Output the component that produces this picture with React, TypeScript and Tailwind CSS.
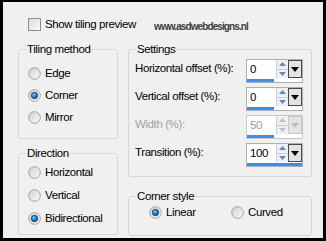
import React from "react";

const font = "font-['Liberation_Sans',Arial,sans-serif]";

function Radio({ checked }: { checked?: boolean }) {
  return (
    <svg width="13" height="13" viewBox="0 0 13 13" className="shrink-0">
      <defs>
        <linearGradient id="rg" x1="0" y1="0" x2="1" y2="1">
          <stop offset="0" stopColor="#cfcfcf" />
          <stop offset="1" stopColor="#fbfbfb" />
        </linearGradient>
        <radialGradient id="bg" cx="0.4" cy="0.35" r="0.7">
          <stop offset="0" stopColor="#6fc0f5" />
          <stop offset="0.6" stopColor="#1a78c8" />
          <stop offset="1" stopColor="#0b3f80" />
        </radialGradient>
      </defs>
      <circle cx="6.5" cy="6.5" r="5.8" fill="url(#rg)" stroke="#a3a3a3" strokeWidth="1" />
      {checked && <circle cx="6.5" cy="6.5" r="3.2" fill="url(#bg)" stroke="#163a66" strokeWidth="0.8" />}
    </svg>
  );
}

function RadioRow({ label, checked, className = "" }: { label: string; checked?: boolean; className?: string }) {
  return (
    <div className={`flex h-[13px] items-center gap-[4px] ${className}`}>
      <Radio checked={checked} />
      <span className="leading-none">{label}</span>
    </div>
  );
}

function Group({ title, className = "", children }: { title: string; className?: string; children: React.ReactNode }) {
  return (
    <div className={`relative rounded-[3px] border border-[#d3d8dc] ${className}`}>
      <span className="absolute left-[7px] top-[-8px] bg-[#f0f0f0] px-[1px] leading-[14px]">{title}</span>
      {children}
    </div>
  );
}

function Spin({ value, bar, disabled }: { value: string; bar: number; disabled?: boolean }) {
  return (
    <div className={`flex h-[24px] w-[57px] shrink-0 flex-col border ${disabled ? "border-[#c8c8c8]" : "border-[#a9afb6]"} bg-white`}>
      <div className="flex h-[18px]">
        <div className={`flex w-[30px] items-center pl-[3px] pt-[2px] leading-none ${disabled ? "text-[#9a9a9a]" : "text-black"}`}>{value}</div>
        <div className="flex w-[12px] flex-col border-l border-[#c9cfd6] bg-[#eef1f4]">
          <div className="flex flex-1 items-center justify-center border-b border-[#c9cfd6]">
            <svg width="7" height="4" viewBox="0 0 7 4"><path d="M0 4 L3.5 0 L7 4 Z" fill={disabled ? "#c0c0c0" : "#6a86b8"} /></svg>
          </div>
          <div className="flex flex-1 items-center justify-center">
            <svg width="7" height="4" viewBox="0 0 7 4"><path d="M0 0 L3.5 4 L7 0 Z" fill={disabled ? "#c0c0c0" : "#6a86b8"} /></svg>
          </div>
        </div>
        <div className={`flex w-[14px] items-center justify-center border ${disabled ? "border-[#c8c8c8]" : "border-[#4a4a4a]"} bg-[#e4e4e4]`}>
          <svg width="8" height="5" viewBox="0 0 8 5"><path d="M0 0 L8 0 L4 5 Z" fill={disabled ? "#bdbdbd" : "#000"} /></svg>
        </div>
      </div>
      <div className="mt-[1px] h-[3px] bg-[#3c8fe6]" style={{ width: bar }} />
    </div>
  );
}

function SettingRow({ label, value, bar, disabled }: { label: string; value: string; bar: number; disabled?: boolean }) {
  return (
    <div className="flex items-start justify-between">
      <span className={`whitespace-nowrap pt-[2px] leading-[14px] ${disabled ? "text-[#a3a3a3]" : "text-black"}`}>{label}</span>
      <Spin value={value} bar={bar} disabled={disabled} />
    </div>
  );
}

export default function App() {
  return (
    <div className={`h-[241px] w-[326px] bg-black pb-[3px] pl-[3px] pr-[3px] pt-[2px] ${font} text-[11.5px] tracking-[-0.4px] text-black`}>
      <div className="flex h-full w-full flex-col bg-[#f0f0f0] pt-[16px]">
        <div className="flex h-[13px] items-center pl-[25px]">
          <div className="h-[13px] w-[13px] shrink-0 border border-[#8e8f8f] bg-gradient-to-br from-[#dcdcdc] to-[#f8f8f8]" />
          <span className="ml-[4px] w-[109px] whitespace-nowrap leading-none">Show tiling preview</span>
          <span className="mt-[5px] whitespace-nowrap text-[10px] font-bold leading-none tracking-[-0.9px] text-[#3e3e3e]">www.asdwebdesigns.nl</span>
        </div>
        <div className="mt-[18px] flex gap-[10px] pl-[15px]">
          <div className="flex w-[100px] flex-col gap-[14px]">
            <Group title="Tiling method" className="h-[90px]">
              <div className="flex flex-col gap-[9px] pl-[9px] pt-[17px]">
                <RadioRow label="Edge" />
                <RadioRow label="Corner" checked />
                <RadioRow label="Mirror" />
              </div>
            </Group>
            <Group title="Direction" className="h-[82px]">
              <div className="flex flex-col gap-[10px] pl-[9px] pt-[12px]">
                <RadioRow label="Horizontal" />
                <RadioRow label="Vertical" />
                <RadioRow label="Bidirectional" checked />
              </div>
            </Group>
          </div>
          <div className="flex w-[184px] flex-col gap-[19px]">
            <Group title="Settings" className="h-[128px]">
              <div className="flex flex-col gap-[4px] pl-[6px] pr-[8px] pt-[9px]">
                <SettingRow label="Horizontal offset (%):" value="0" bar={27} />
                <SettingRow label="Vertical offset (%):" value="0" bar={27} />
                <SettingRow label="Width (%):" value="50" bar={27} disabled />
                <SettingRow label="Transition (%):" value="100" bar={55} />
              </div>
            </Group>
            <Group title="Corner style" className="h-[40px]">
              <div className="flex items-center pl-[20px] pt-[9px]">
                <RadioRow label="Linear" checked className="w-[82px]" />
                <RadioRow label="Curved" />
              </div>
            </Group>
          </div>
        </div>
      </div>
    </div>
  );
}
